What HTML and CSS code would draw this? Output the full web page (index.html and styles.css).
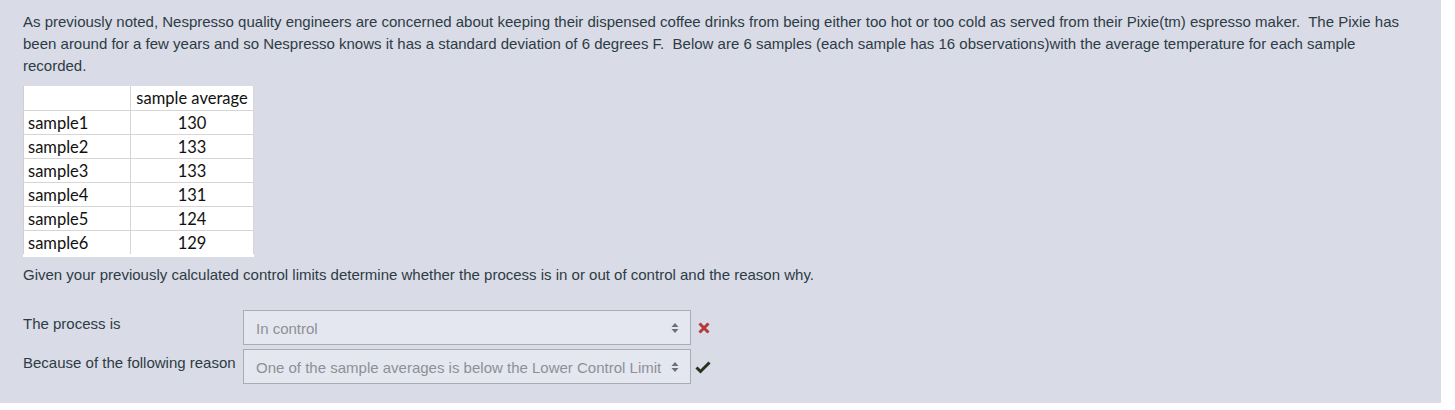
FILE: index.html
```html
<!DOCTYPE html>
<html lang="en">
<head>
  <meta charset="UTF-8">
  <title>Question</title>
  <link rel="stylesheet" href="styles.css">
</head>
<body>
  <div class="question">
    <p class="intro">As previously noted, Nespresso quality engineers are concerned about keeping their dispensed coffee drinks from being either too hot or too cold as served from their Pixie(tm) espresso maker.&nbsp; The Pixie has been around for a few years and so Nespresso knows it has a standard deviation of 6 degrees F.&nbsp; Below are 6 samples (each sample has 16 observations)with the average temperature for each sample recorded.</p>

    <table class="samples">
      <tr><td></td><td class="num">sample average</td></tr>
      <tr><td>sample1</td><td class="num">130</td></tr>
      <tr><td>sample2</td><td class="num">133</td></tr>
      <tr><td>sample3</td><td class="num">133</td></tr>
      <tr><td>sample4</td><td class="num">131</td></tr>
      <tr><td>sample5</td><td class="num">124</td></tr>
      <tr><td>sample6</td><td class="num">129</td></tr>
    </table>

    <p class="ask">Given your previously calculated control limits determine whether the process is in or out of control and the reason why.</p>

    <div class="answers">
      <div class="answer-row">
        <label class="answer-label">The process is</label>
        <div class="select">
          <span>In control</span>
          <svg class="arrows" width="8" height="12" viewBox="0 0 8 12"><path d="M4 1 L7.5 5 H0.5 Z M4 11 L7.5 7 H0.5 Z" fill="#6b6e75"/></svg>
        </div>
        <svg class="mark" width="14" height="14" viewBox="0 0 14 14"><path d="M2.5 2.5 L11.5 11.5 M11.5 2.5 L2.5 11.5" stroke="#b23a3a" stroke-width="3"/></svg>
      </div>
      <div class="answer-row">
        <label class="answer-label">Because of the following reason</label>
        <div class="select">
          <span>One of the sample averages is below the Lower Control Limit</span>
          <svg class="arrows" width="8" height="12" viewBox="0 0 8 12"><path d="M4 1 L7.5 5 H0.5 Z M4 11 L7.5 7 H0.5 Z" fill="#6b6e75"/></svg>
        </div>
        <svg class="mark ok" width="16" height="14" viewBox="0 0 16 14"><path d="M1.5 7.5 L5.5 11.5 L14.5 2.5" stroke="#24331c" stroke-width="3" fill="none"/></svg>
      </div>
    </div>
  </div>
</body>
</html>
```

FILE: styles.css
```css
body {
  margin: 0;
  background: #fff;
  font-family: "Liberation Sans", Arial, sans-serif;
  font-size: 15px;
  color: #2d3b45;
}

.question {
  width: 1441px;
  height: 403px;
  box-sizing: border-box;
  background: #d9dce6;
  padding: 11px 40px 0 23px;
}

.intro {
  margin: 0;
  line-height: 22px;
}

.samples {
  margin-top: 9px;
  border-collapse: collapse;
  background: #fff;
  font-family: Lato, "Open Sans", sans-serif;
  font-size: 16.5px;
  color: #111;
  border-left: 1px solid #cfcfcf;
  border-bottom: 3px solid #fff;
}

.samples td {
  height: 23px;
  padding: 0 4px;
  border: 1px solid #d6d6d6;
  border-top: none;
  border-left: none;
}

.samples td:first-child {
  width: 98px;
}

.samples td.num {
  width: 114px;
  text-align: center;
}

.samples tr:first-child td {
  height: 24px;
}

.ask {
  margin: 7px 0 0;
  line-height: 22px;
}

.answers {
  margin-top: 24px;
}

.answer-row {
  display: flex;
  align-items: flex-start;
  margin-bottom: 4px;
}

.answer-label {
  width: 220px;
  padding-top: 5px;
  line-height: 18px;
}

.select {
  width: 448px;
  height: 35px;
  box-sizing: border-box;
  border: 1px solid #a9acb3;
  background: #e4e7ef;
  color: #8d9097;
  display: flex;
  align-items: center;
  justify-content: space-between;
  padding: 1px 11px 0 12px;
}

.arrows {
  display: block;
}

.mark {
  margin: 11px 0 0 6px;
}

.mark.ok {
  margin-left: 4px;
}
```
